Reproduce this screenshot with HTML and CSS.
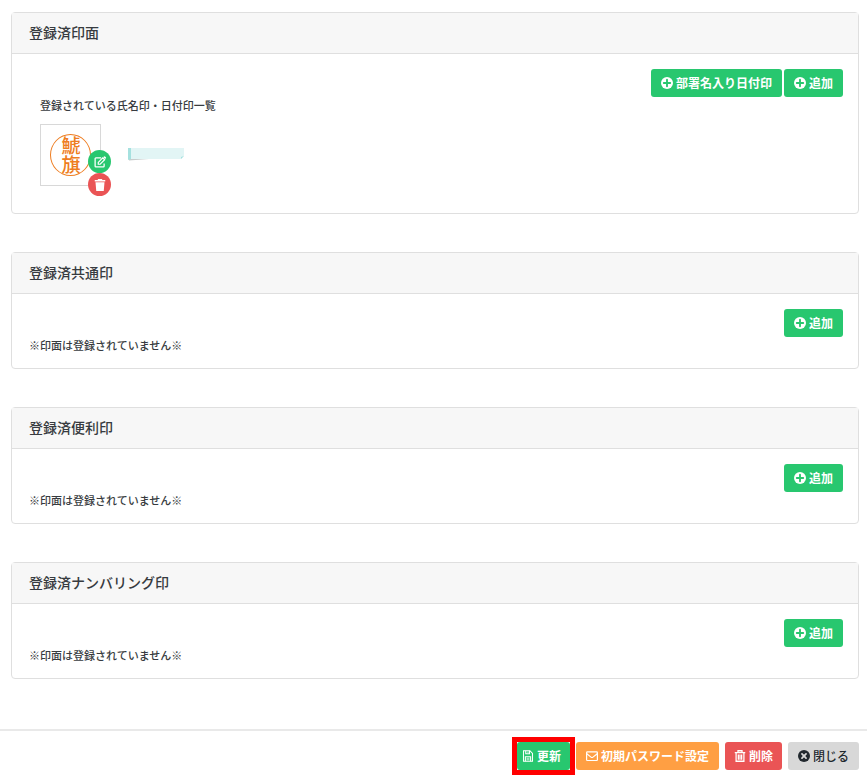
FILE: index.html
```html
<!DOCTYPE html>
<html lang="ja">
<head>
    <meta charset="UTF-8">
    <meta name="viewport" content="width=device-width, initial-scale=1.0">
    <title>登録済印面</title>
    <link rel="stylesheet" href="styles.css">
</head>
<body>
    <!-- shared icons -->
    <svg class="sprite" aria-hidden="true">
        <symbol id="plus" viewBox="0 0 16 16">
            <circle cx="8" cy="8" r="8" fill="currentColor"/>
            <path d="M8 3.7v8.6M3.7 8h8.6" stroke="#28c76f" stroke-width="2.5" stroke-linecap="round"/>
        </symbol>
        <symbol id="times" viewBox="0 0 16 16">
            <circle cx="8" cy="8" r="8" fill="currentColor"/>
            <path d="M5.3 5.3l5.4 5.4M10.7 5.3l-5.4 5.4" stroke="#d8d8d8" stroke-width="2.4" stroke-linecap="round"/>
        </symbol>
        <symbol id="edit" viewBox="0 0 16 16">
            <path d="M9.5 2.5H2.5a1 1 0 0 0-1 1v10a1 1 0 0 0 1 1h10a1 1 0 0 0 1-1V10" fill="none" stroke="currentColor" stroke-width="1.7"/>
            <path d="M5.7 11V8.5l6-6 2.5 2.5-6 6z" fill="none" stroke="currentColor" stroke-width="1.6"/>
            <path d="M12.3 1.6l1-1a1 1 0 0 1 1.4 0l1.1 1.1a1 1 0 0 1 0 1.4l-1 1z" fill="currentColor"/>
        </symbol>
        <symbol id="bin" viewBox="0 0 16 16">
            <path d="M5.5 0h5l.8 1.3H15v2H1v-2h3.7zM2 4.3h12L13 16H3z" fill="currentColor"/>
        </symbol>
        <symbol id="trash" viewBox="0 0 16 16">
            <path d="M1 3.5h14M5.3 3V1h5.4v2M2.8 4v11h10.4V4M5.8 6v7M8 6v7M10.2 6v7" fill="none" stroke="currentColor" stroke-width="1.7"/>
        </symbol>
        <symbol id="save" viewBox="0 0 14 16">
            <path d="M1 1h8.5L13 4.5V15H1z" fill="none" stroke="currentColor" stroke-width="1.4"/>
            <path d="M4 1v4h5V1M3.5 15V9h7v6" fill="none" stroke="currentColor" stroke-width="1.4"/>
            <path d="M5 11h4M5 13h4M7 2v2" stroke="currentColor"/>
        </symbol>
        <symbol id="mail" viewBox="0 0 16 14">
            <rect x=".8" y="1.5" width="14.4" height="11.5" rx="1" fill="none" stroke="currentColor" stroke-width="1.6"/>
            <path d="M1 4l5.7 4.5q1.3 1 2.6 0L15 4" fill="none" stroke="currentColor" stroke-width="1.6"/>
        </symbol>
    </svg>

    <main class="main">
        <section class="card">
            <h2 class="card-header">登録済印面</h2>
            <div class="card-body">
                <div class="tools">
                    <button type="button" class="btn green"><svg class="icon"><use href="#plus"/></svg><span>部署名入り日付印</span></button>
                    <button type="button" class="btn green"><svg class="icon"><use href="#plus"/></svg><span>追加</span></button>
                </div>
                <div class="list">
                    <p class="text">登録されている氏名印・日付印一覧</p>
                    <div class="item">
                        <div class="stamp">
                            <div class="seal">鯱旗</div>
                            <div class="actions">
                                <button type="button" class="round green" aria-label="編集"><svg class="icon"><use href="#edit"/></svg></button>
                                <button type="button" class="round red" aria-label="削除"><svg class="icon"><use href="#bin"/></svg></button>
                            </div>
                        </div>
                        <svg class="note" viewBox="0 0 58 14" aria-hidden="true">
                            <path d="M2 12h20l-20 1.5z" fill="#c8cccc"/>
                            <path d="M1 1h56v8l-3 3H1z" fill="#e2f5f5"/>
                            <path d="M1 1h3v11l-3 1z" fill="#a5e1df"/>
                            <path d="M57 9l-3 3v-2z" fill="#a5e1df"/>
                        </svg>
                    </div>
                </div>
            </div>
        </section>

        <section class="card">
            <h2 class="card-header">登録済共通印</h2>
            <div class="card-body">
                <div class="tools">
                    <button type="button" class="btn green"><svg class="icon"><use href="#plus"/></svg><span>追加</span></button>
                </div>
                <p class="text">※印面は登録されていません※</p>
            </div>
        </section>

        <section class="card">
            <h2 class="card-header">登録済便利印</h2>
            <div class="card-body">
                <div class="tools">
                    <button type="button" class="btn green"><svg class="icon"><use href="#plus"/></svg><span>追加</span></button>
                </div>
                <p class="text">※印面は登録されていません※</p>
            </div>
        </section>

        <section class="card">
            <h2 class="card-header">登録済ナンバリング印</h2>
            <div class="card-body">
                <div class="tools">
                    <button type="button" class="btn green"><svg class="icon"><use href="#plus"/></svg><span>追加</span></button>
                </div>
                <p class="text">※印面は登録されていません※</p>
            </div>
        </section>
    </main>

    <footer class="footer">
        <div class="highlight">
            <button type="button" class="btn small green"><svg class="icon"><use href="#save"/></svg><span>更新</span></button>
        </div>
        <button type="button" class="btn orange"><svg class="icon"><use href="#mail"/></svg><span>初期パスワード設定</span></button>
        <button type="button" class="btn medium red"><svg class="icon"><use href="#trash"/></svg><span>削除</span></button>
        <button type="button" class="btn gray"><svg class="icon"><use href="#times"/></svg><span>閉じる</span></button>
    </footer>
</body>
</html>
```
FILE: styles.css
```css
*{
    margin: 0;
    padding: 0;
    box-sizing: border-box;
}
body{
    background-color: white;
    color: #373b40;
    font-family: "Noto Sans CJK JP", sans-serif;
}
.sprite{
    display: none;
}
.main{
    display: flex;
    flex-direction: column;
    gap: 38px;
    padding: 12px 8px 50px 11px;
}
.card{
    border: 1px solid #dfdfdf;
    border-radius: 4px;
}
.card-header{
    padding: 9px 17px 11px;
    background-color: #f7f7f7;
    border-bottom: 1px solid #dfdfdf;
    font-size: 14px;
    font-weight: 500;
    line-height: 20px;
}
.card-body{
    padding: 15px 15px 15px 17px;
}
.tools{
    display: flex;
    justify-content: flex-end;
    gap: 2px;
}
.text{
    font-size: 11px;
    font-weight: 500;
    line-height: 16px;
}
.btn{
    display: flex;
    align-items: center;
    gap: 3px;
    height: 28px;
    padding: 0 10px;
    border: none;
    border-radius: 3px;
    color: white;
    font-family: inherit;
    font-size: 12px;
    font-weight: 700;
    line-height: 16px;
    white-space: nowrap;
}
.btn span{
    padding-bottom: 1px;
}
.icon{
    width: 12px;
    height: 12px;
}
.small{
    padding: 0 9px 0 5px;
}
.medium{
    padding: 0 9px;
}
.green{
    background-color: #28c76f;
}
.red{
    background-color: #ea5455;
}
.orange{
    background-color: #ff9f43;
}
.gray{
    background-color: #d8d8d8;
    color: #22292f;
    font-weight: 500;
}
.list{
    padding: 0 11px 12px;
}
.item{
    display: flex;
    gap: 26px;
    margin-top: 11px;
}
.stamp{
    position: relative;
    display: flex;
    align-items: center;
    justify-content: center;
    width: 61px;
    height: 62px;
    border: 1px solid #d8d8d8;
}
.seal{
    display: flex;
    align-items: center;
    justify-content: center;
    width: 41px;
    height: 42px;
    border: 1px solid #ee7d21;
    border-radius: 50%;
    color: #ee7d21;
    font-size: 19px;
    font-weight: 500;
    line-height: 20px;
    writing-mode: vertical-rl;
}
/* edit and delete sit over the corner of the stamp */
.actions{
    position: absolute;
    top: 25px;
    right: -11px;
}
.round{
    display: flex;
    align-items: center;
    justify-content: center;
    width: 23px;
    height: 23px;
    border: none;
    border-radius: 50%;
    color: white;
}
.note{
    width: 58px;
    height: 14px;
    margin-top: 23px;
}
.footer{
    display: flex;
    align-items: center;
    justify-content: flex-end;
    gap: 6px;
    padding: 6px 8px 4px;
    border-top: 2px solid #e9e9e9;
}
.highlight{
    margin-right: -5px;
    border: 5px solid #ff0000;
}
```
